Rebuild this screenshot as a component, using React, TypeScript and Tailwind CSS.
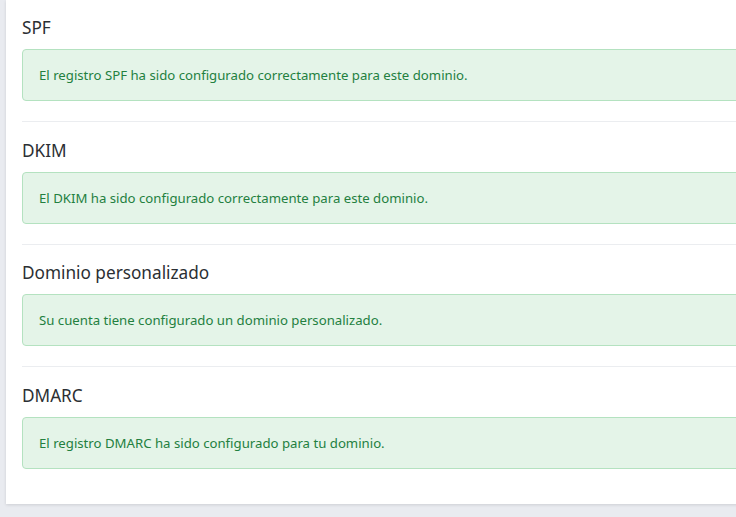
const sections = [
  { title: "SPF", message: "El registro SPF ha sido configurado correctamente para este dominio." },
  { title: "DKIM", message: "El DKIM ha sido configurado correctamente para este dominio." },
  { title: "Dominio personalizado", message: "Su cuenta tiene configurado un dominio personalizado." },
  { title: "DMARC", message: "El registro DMARC ha sido configurado para tu dominio." },
];

export default function App() {
  return (
    <div className="h-[517px] overflow-hidden bg-[#e9ebf0] pl-[6px] font-['Noto_Sans',sans-serif]">
      <div className="w-[800px] bg-white px-4 pb-[35px] pt-4 shadow-[0_1px_3px_rgba(0,0,0,0.12)]">
        {sections.map((s, i) => (
          <div key={s.title} className={i > 0 ? "border-t border-[#ebedf0] pt-[16.67px]" : ""}>
            <h5 className="mb-[9px] h-6 text-[17.2px] leading-6 text-[#2b2f33]">{s.title}</h5>
            <div
              className={
                "flex h-[52px] items-center rounded border border-[#b4e2c0] bg-[#e4f4e8] px-4 text-[13.2px] leading-[18px] text-[#23803f] " +
                (i < sections.length - 1 ? "mb-5" : "")
              }
            >
              {s.message}
            </div>
          </div>
        ))}
      </div>
    </div>
  );
}
